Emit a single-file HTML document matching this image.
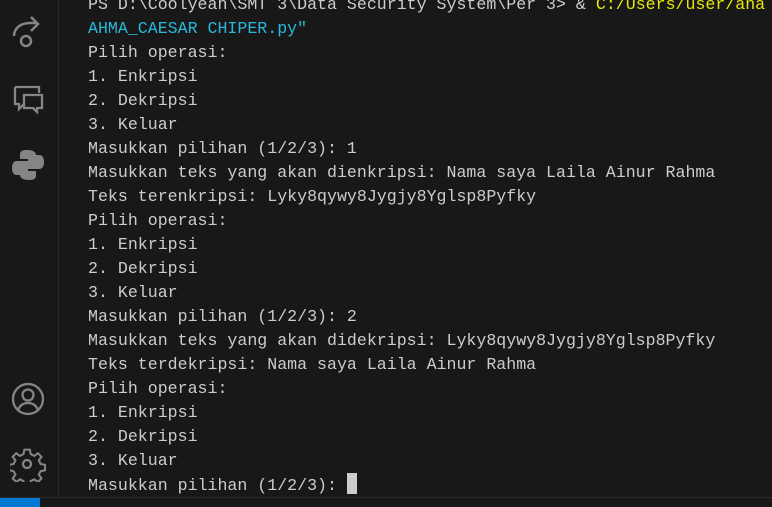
<!DOCTYPE html>
<html><head><style>
html,body{margin:0;padding:0;width:772px;height:507px;overflow:hidden;background:#181818;position:relative;}
.act{position:absolute;left:0;top:0;width:58px;height:497px;background:#181818;border-right:1px solid #2b2b2b;}
.term{position:absolute;left:88px;top:-7px;width:684px;height:504px;overflow:hidden;font-family:"Liberation Mono",monospace;font-size:16.6px;line-height:24px;color:#cccccc;white-space:pre;}
.y{color:#e5e510}.c{color:#29b8db}
.cur{display:inline-block;width:10px;height:21px;background:#cccccc;vertical-align:-4px}
.status{position:absolute;left:0;top:497px;width:772px;height:10px;background:#181818;border-top:1px solid #2b2b2b;box-sizing:border-box;}
.blue{position:absolute;left:0;top:0;width:40px;height:10px;background:#0078d4}
svg{position:absolute}
</style></head><body>
<div class="act">
<svg style="left:10px;top:14px" width="36" height="36" viewBox="0 0 36 36" fill="none" stroke="#858585" stroke-width="2.5"><path d="M4 22c0-8 7-13 16-13h6M21 3l7 7-7 7"/><circle cx="16" cy="27" r="5"/></svg>
<svg style="left:12px;top:84px" width="34" height="32" viewBox="0 0 34 32" fill="none" stroke="#858585" stroke-width="2.3"><path d="M3 3h24v6M3 3v17h4v5l5-5"/><path d="M12 11h18v13h-5v4l-4-4h-9z"/></svg>
<svg style="left:11px;top:148px" width="34" height="34" viewBox="0 0 34 34" fill="#858585"><path d="M16 2c-7 0-7 3-7 5v4h8v2H6c-3 0-5 2-5 7s2 7 5 7h3v-4c0-3 2-5 5-5h7c2 0 4-2 4-4V7c0-3-3-5-9-5z"/><path d="M18 32c7 0 7-3 7-5v-4h-8v-2h11c3 0 5-2 5-7s-2-7-5-7h-3v4c0 3-2 5-5 5h-7c-2 0-4 2-4 4v7c0 3 3 5 9 5z"/></svg>
<svg style="left:10px;top:381px" width="36" height="36" viewBox="0 0 36 36" fill="none" stroke="#858585" stroke-width="2.3"><circle cx="18" cy="18" r="15"/><circle cx="18" cy="14" r="5.5"/><path d="M8 29c2-5 6-7 10-7s8 2 10 7"/></svg>
<svg style="left:10px;top:446px" width="36" height="36" viewBox="0 0 36 36" fill="none" stroke="#858585" stroke-width="2.3"><path d="M15 3h6l1 5 4 2 4-3 4 4-3 4 2 4 5 1v6l-5 1-2 4 3 4-4 4-4-3-4 2-1 5h-6l-1-5-4-2-4 3-4-4 3-4-2-4-5-1v-6l5-1 2-4-3-4 4-4 4 3 4-2z" transform="scale(0.9) translate(1 1)"/><circle cx="17" cy="18" r="4"/></svg>
</div>
<div class="term">PS D:\Coolyeah\SMT 3\Data Security System\Per 3&gt; &amp; <span class="y">C:/Users/user/ana</span>
<span class="c">AHMA_CAESAR CHIPER.py"</span>
Pilih operasi:
1. Enkripsi
2. Dekripsi
3. Keluar
Masukkan pilihan (1/2/3): 1
Masukkan teks yang akan dienkripsi: Nama saya Laila Ainur Rahma
Teks terenkripsi: Lyky8qywy8Jygjy8Yglsp8Pyfky
Pilih operasi:
1. Enkripsi
2. Dekripsi
3. Keluar
Masukkan pilihan (1/2/3): 2
Masukkan teks yang akan didekripsi: Lyky8qywy8Jygjy8Yglsp8Pyfky
Teks terdekripsi: Nama saya Laila Ainur Rahma
Pilih operasi:
1. Enkripsi
2. Dekripsi
3. Keluar
Masukkan pilihan (1/2/3): <span class="cur"></span></div>
<div class="status"><div class="blue"></div></div>
</body></html>
